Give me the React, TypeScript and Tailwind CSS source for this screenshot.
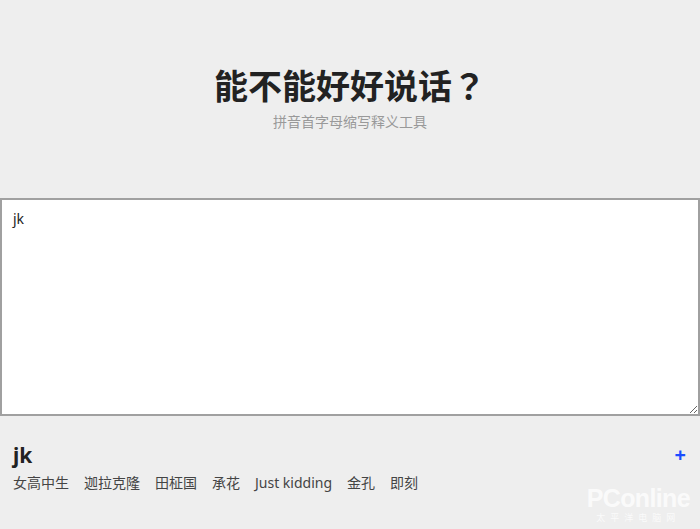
import { useState } from "react";

const words = ["女高中生", "迦拉克隆", "田柾国", "承花", "Just kidding", "金孔", "即刻"];

export default function App() {
	const [text, setText] = useState("jk");

	return (
		<div
			className="relative min-h-[529px] bg-[#eeeeee] text-[#333] overflow-hidden"
			style={{ fontFamily: '"Noto Sans", "Noto Sans CJK SC", sans-serif' }}
		>
			{/* Header */}
			<div className="pt-[60px] text-center">
				<h1
					className="text-[34px] leading-[50px] font-bold text-[#222]"
					style={{ fontFamily: '"Noto Sans CJK SC", sans-serif' }}
				>
					能不能好好说话
					<span className="inline-block w-[34px] text-center" style={{ fontFamily: '"Noto Sans CJK JP", sans-serif' }}>
						？
					</span>
				</h1>
				<p className="mt-[2px] text-[14px] leading-[20px] text-[#999]">拼音首字母缩写释义工具</p>
			</div>

			{/* Input */}
			<textarea
				value={text}
				onChange={(e) => setText(e.target.value)}
				className="mt-[66px] block w-full h-[218px] border-2 border-[#a0a0a0] bg-white px-[11px] py-[8px] text-[14px] leading-[22px] text-[#222] outline-none"
			/>

			{/* Result */}
			<div className="px-[13px] pt-[24px]">
				<div className="flex items-center justify-between">
					<span className="text-[21px] leading-[30px] font-bold text-[#222]">jk</span>
					<span className="text-[20px] leading-[20px] font-bold text-[#1a4cff] pr-[1px]">+</span>
				</div>
				<div className="mt-[2px] flex gap-[15px] text-[14px] leading-[22px] text-[#444]">
					{words.map((w) => (
						<span key={w}>{w}</span>
					))}
				</div>
			</div>

			{/* Watermark */}
			<div className="absolute right-[10px] bottom-[6px] flex flex-col items-center text-white/75 select-none">
				<div
					className="text-[25px] leading-[24px] font-bold tracking-tight"
					style={{ fontFamily: '"Liberation Sans", sans-serif' }}
				>
					PConline
				</div>
				<div className="mt-[3px] text-[9px] leading-[10px] tracking-[5px]">太平洋电脑网</div>
			</div>
		</div>
	);
}
